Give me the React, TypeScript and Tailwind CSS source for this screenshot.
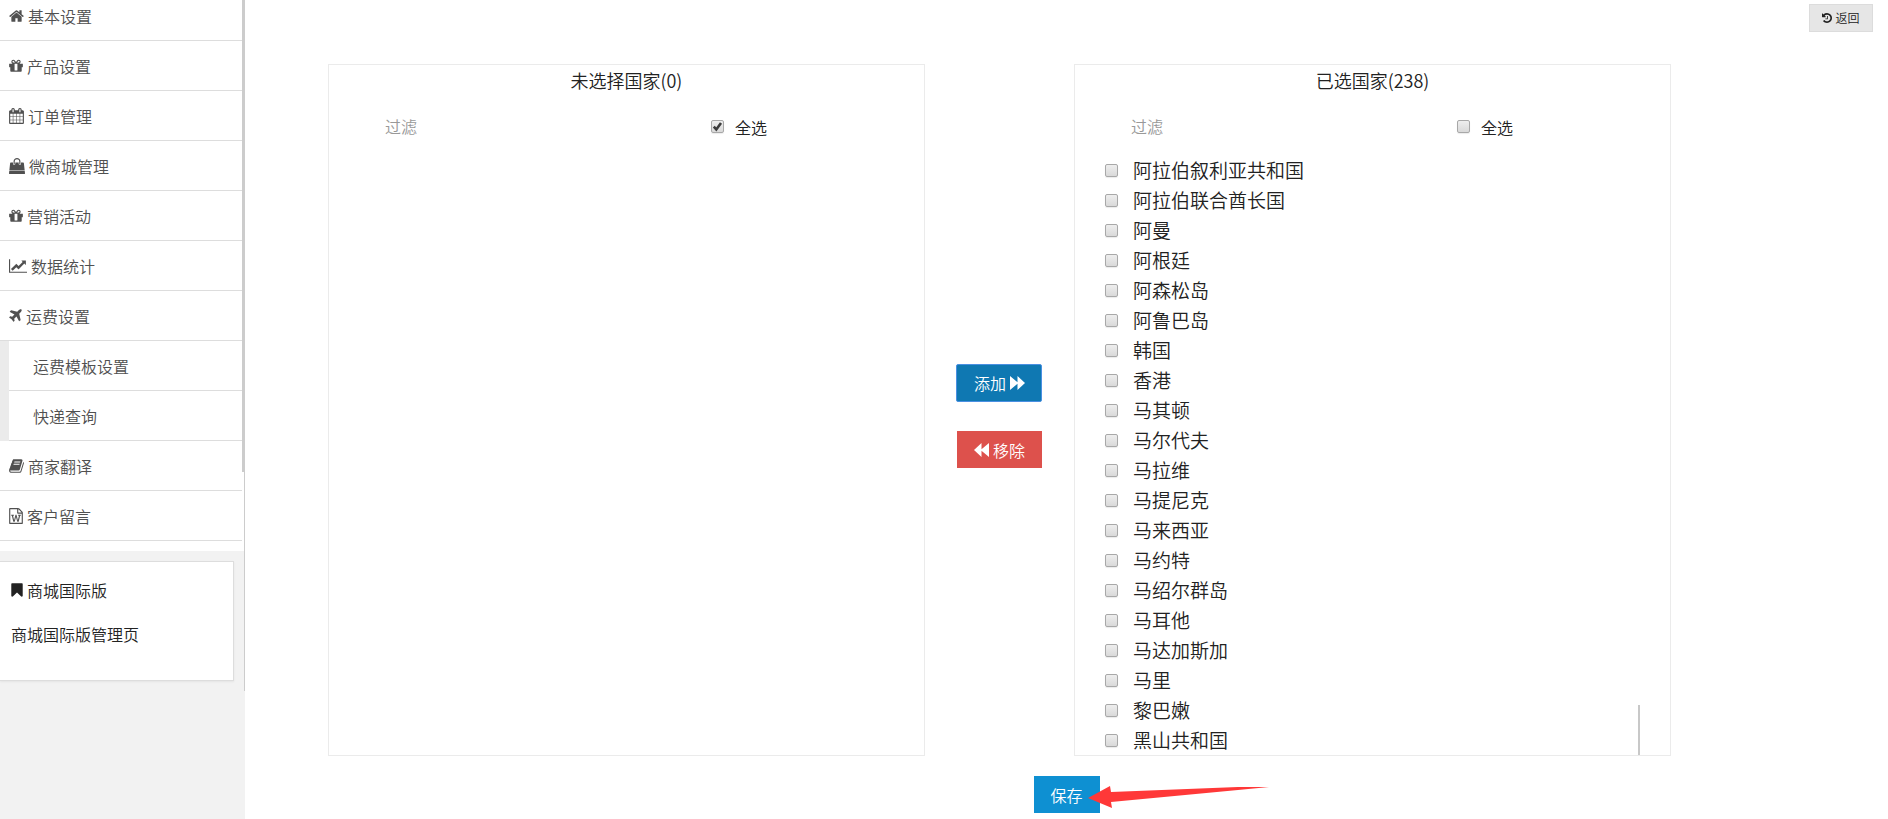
import { useState } from "react";
import type { ReactNode } from "react";

type IconProps = { box: string; d: string; className: string };

function Icon({ box, d, className }: IconProps) {
  return (
    <svg viewBox={box} className={className} fill="currentColor" aria-hidden="true">
      <path d={d} />
    </svg>
  );
}

const GIFT =
  "M1056 1356v-716h-320v716q0 25 18 38.5t46 13.5h192q28 0 46-13.5t18-38.5zm-456-844h195l-126-161q-26-31-69-31-40 0-68 28t-28 68 28 68 68 28zm688-96q0-40-28-68t-68-28q-43 0-69 31l-125 161h194q40 0 68-28t28-68zm376 256v320q0 14-9 23t-23 9h-96v416q0 40-28 68t-68 28h-1088q-40 0-68-28t-28-68v-416h-96q-14 0-23-9t-9-23v-320q0-14 9-23t23-9h440q-93 0-158.5-65.5t-65.5-158.5 65.5-158.5 158.5-65.5q107 0 168 77l128 165 128-165q61-77 168-77 93 0 158.5 65.5t65.5 158.5-65.5 158.5-158.5 65.5h440q14 0 23 9t9 23z";

const HOME =
  "M1472 992v480q0 26-19 45t-45 19h-384v-384h-256v384h-384q-26 0-45-19t-19-45v-480q0-1 .5-3t.5-3l575-474 575 474q1 2 1 6zm223-69l-62 74q-8 9-21 11h-3q-13 0-21-7l-692-577-692 577q-12 8-24 7-13-2-21-11l-62-74q-8-10-7-23.5t11-21.5l719-599q32-26 76-26t76 26l244 204v-195q0-14 9-23t23-9h192q14 0 23 9t9 23v408l219 182q10 8 11 21.5t-7 23.5z";

const CALENDAR =
  "M192 1664h288v-288h-288v288zm352 0h320v-288h-320v288zm-352-352h288v-320h-288v320zm352 0h320v-320h-320v320zm-352-384h288v-288h-288v288zm736 736h320v-288h-320v288zm-384-736h320v-288h-320v288zm768 736h288v-288h-288v288zm-384-352h320v-320h-320v320zm-352-864v-288q0-13-9.5-22.5t-22.5-9.5h-64q-13 0-22.5 9.5t-9.5 22.5v288q0 13 9.5 22.5t22.5 9.5h64q13 0 22.5-9.5t9.5-22.5zm736 864h288v-320h-288v320zm-384-384h320v-288h-320v288zm384 0h288v-288h-288v288zm32-480v-288q0-13-9.5-22.5t-22.5-9.5h-64q-13 0-22.5 9.5t-9.5 22.5v288q0 13 9.5 22.5t22.5 9.5h64q13 0 22.5-9.5t9.5-22.5zm384-64v1280q0 52-38 90t-90 38h-1408q-52 0-90-38t-38-90v-1280q0-52 38-90t90-38h128v-96q0-66 47-113t113-47h64q66 0 113 47t47 113v96h384v-96q0-66 47-113t113-47h64q66 0 113 47t47 113v96h128q52 0 90 38t38 90z";

const BAG =
  "M1757 1408l35 313q3 28-16 50-19 21-48 21h-1664q-29 0-48-21-19-22-16-50l35-313h1722zm-93-839l86 775h-1708l86-775q3-24 21-40.5t43-16.5h256v128q0 53 37.5 90.5t90.5 37.5 90.5-37.5 37.5-90.5v-128h384v128q0 53 37.5 90.5t90.5 37.5 90.5-37.5 37.5-90.5v-128h256q25 0 43 16.5t21 40.5zm-384-185v256q0 26-19 45t-45 19-45-19-19-45v-256q0-106-75-181t-181-75-181 75-75 181v256q0 26-19 45t-45 19-45-19-19-45v-256q0-159 112.5-271.5t271.5-112.5 271.5 112.5 112.5 271.5z";

const CHART =
  "M2048 1536v128h-2048v-1536h128v1408h1920zm-128-1248v435q0 21-19.5 29.5t-35.5-7.5l-121-121-633 633q-10 10-23 10t-23-10l-233-233-416 416-192-192 585-585q10-10 23-10t23 10l233 233 464-464-121-121q-16-16-7.5-35.5t29.5-19.5h435q14 0 23 9t9 23z";

const PLANE =
  "M1568 160q44 52 12 148t-108 172l-161 161 160 696q5 19-12 33l-128 96q-7 6-19 6-4 0-7-1-15-3-21-16l-279-508-259 259 53 194q5 17-8 31l-96 96q-9 9-23 9h-2q-15-2-24-13l-189-252-252-189q-11-7-13-23-1-13 9-25l96-97q9-9 23-9 6 0 8 1l194 53 259-259-508-279q-14-8-17-24-2-16 9-27l128-128q14-13 30-8l665 159 160-160q76-76 172-108t148 12z";

const BOOK =
  "M1703 478q40 57 18 129l-275 906q-19 64-76.5 107.5t-122.5 43.5h-923q-77 0-148.5-53.5t-99.5-131.5q-24-67-2-127 0-4 3-27t4-37q1-8-3-21.5t-3-19.5q2-11 8-21t16.5-23.5 16.5-23.5q23-38 45-91.5t30-91.5q3-10 .5-30t-.5-28q3-11 17-28t17-23q21-36 42-92t25-90q1-9-2.5-32t.5-28q4-13 22-30.5t22-22.5q19-26 42.5-84.5t27.5-96.5q1-8-3-25.5t-2-26.5q2-8 9-18t18-23 17-21q8-12 16.5-30.5t15-35 16-36 19.5-32 26.5-23.5 36-11.5 47.5 5.5l-1 3q38-9 51-9h761q74 0 114 56t18 130l-274 906q-36 119-71.5 153.5t-128.5 34.5h-869q-27 0-38 15-11 16-1 43 24 70 144 70h923q29 0 56-15.5t35-41.5l300-987q7-22 5-57 38 15 59 43zm-1064 2q-4 13 2 22.5t20 9.5h608q13 0 25.5-9.5t16.5-22.5l21-64q4-13-2-22.5t-20-9.5h-608q-13 0-25.5 9.5t-16.5 22.5zm-83 256q-4 13 2 22.5t20 9.5h608q13 0 25.5-9.5t16.5-22.5l21-64q4-13-2-22.5t-20-9.5h-608q-13 0-25.5 9.5t-16.5 22.5z";

const WORD_FILE =
  "M1596 380q28 28 48 76t20 88v1152q0 40-28 68t-68 28h-1344q-40 0-68-28t-28-68v-1600q0-40 28-68t68-28h896q40 0 88 20t76 48zm-444-244v376h376q-10-29-22-41l-313-313q-12-12-41-22zm384 1528v-1024h-416q-40 0-68-28t-28-68v-416h-768v1536h1280zm-1175-896v107h70l164 661h159l128-485q7-20 10-46 2-16 2-24h4l3 24q1 3 3.5 20t5.5 26l128 485h159l164-661h70v-107h-300v107h90l-99 438q-5 20-7 46l-2 21h-4l-3-21q-1-5-4-21t-5-25l-144-545h-114l-144 545q-2 9-4.5 24.5t-3.5 21.5l-4 21h-4l-2-21q-2-26-7-46l-99-438h90v-107h-300z";

const BOOKMARK =
  "M1420 128q23 0 44 9 33 13 52.5 41t19.5 62v1289q0 34-19.5 62t-52.5 41q-19 8-44 8-48 0-83-32l-441-424-441 424q-36 33-83 33-23 0-44-9-33-13-52.5-41t-19.5-62v-1289q0-34 19.5-62t52.5-41q21-9 44-9h1048z";

const HISTORY =
  "M1664 896q0 156-61 298t-164 245-245 164-298 61q-172 0-327-72.5t-264-204.5q-7-10-6.5-22.5t8.5-20.5l137-138q10-9 25-9 16 2 23 12 73 95 179 147t225 52q104 0 198.5-40.5t163.5-109.5 109.5-163.5 40.5-198.5-40.5-198.5-109.5-163.5-163.5-109.5-198.5-40.5q-98 0-188 35.5t-160 101.5l137 138q31 30 14 69-17 40-59 40h-448q-26 0-45-19t-19-45v-448q0-42 40-59 39-17 69 14l130 129q107-101 244.5-156.5t284.5-55.5q156 0 298 61t245 164 164 245 61 298zm-640-288v448q0 14-9 23t-23 9h-320q-14 0-23-9t-9-23v-64q0-14 9-23t23-9h224v-352q0-14 9-23t23-9h64q14 0 23 9t9 23z";

type MenuEntry = {
  label: string;
  box: string;
  d: string;
  size: string;
  children?: string[];
};

const MENU: MenuEntry[] = [
  { label: "基本设置", box: "64 0 1664 1792", d: HOME, size: "h-4 w-[15px]" },
  { label: "产品设置", box: "128 0 1536 1792", d: GIFT, size: "h-4 w-[14px]" },
  { label: "订单管理", box: "64 0 1664 1792", d: CALENDAR, size: "h-4 w-[15px]" },
  { label: "微商城管理", box: "0 0 1792 1792", d: BAG, size: "h-4 w-4" },
  { label: "营销活动", box: "128 0 1536 1792", d: GIFT, size: "h-4 w-[14px]" },
  { label: "数据统计", box: "0 0 2048 1792", d: CHART, size: "h-4 w-[18px]" },
  {
    label: "运费设置",
    box: "192 0 1408 1792",
    d: PLANE,
    size: "h-4 w-[13px]",
    children: ["运费模板设置", "快递查询"],
  },
  { label: "商家翻译", box: "64 0 1664 1792", d: BOOK, size: "h-4 w-[15px]" },
  { label: "客户留言", box: "128 0 1536 1792", d: WORD_FILE, size: "h-4 w-[14px]" },
];

const SELECTED = [
  "阿拉伯叙利亚共和国",
  "阿拉伯联合酋长国",
  "阿曼",
  "阿根廷",
  "阿森松岛",
  "阿鲁巴岛",
  "韩国",
  "香港",
  "马其顿",
  "马尔代夫",
  "马拉维",
  "马提尼克",
  "马来西亚",
  "马约特",
  "马绍尔群岛",
  "马耳他",
  "马达加斯加",
  "马里",
  "黎巴嫩",
  "黑山共和国",
];

function Checkbox({ id, initial = false }: { id: string; initial?: boolean }) {
  const [checked, setChecked] = useState(initial);
  return (
    <span className="relative flex size-[13px] shrink-0">
      <input
        id={id}
        type="checkbox"
        checked={checked}
        onChange={(e) => setChecked(e.target.checked)}
        className="size-[13px] appearance-none rounded-[2px] border border-[#a8a8a8] bg-linear-to-b from-[#eeeeee] to-[#d9d9d9] shadow-[0_1px_1px_rgba(0,0,0,0.08)]"
      />
      {checked && (
        <svg viewBox="0 0 13 13" className="pointer-events-none absolute inset-0 size-[13px]" aria-hidden="true">
          <path d="M2.8 6.6 5.3 9.4 10 3" fill="none" stroke="#3c3c3c" strokeWidth="2.6" />
        </svg>
      )}
    </span>
  );
}

function Sidebar() {
  return (
    <aside className="relative w-[245px] shrink-0 bg-[#f2f2f2]">
      <nav className="h-[551px] overflow-hidden bg-white">
        <ul className="-mt-[9px] mr-[3px] text-base text-[#505050]">
          {MENU.map((item) => (
            <li key={item.label}>
              <a href="#" className="flex h-[50px] items-center gap-1 border-b border-[#dddddd] pl-[9px]">
                <Icon box={item.box} d={item.d} className={`${item.size} shrink-0`} />
                {item.label}
              </a>
              {item.children && (
                <ul className="border-l-[9px] border-[#ebebeb]">
                  {item.children.map((child) => (
                    <li key={child}>
                      <a href="#" className="flex h-[50px] items-center border-b border-[#dddddd] pl-6">
                        {child}
                      </a>
                    </li>
                  ))}
                </ul>
              )}
            </li>
          ))}
        </ul>
      </nav>
      <section className="mt-[10px] mr-[11px] h-[120px] border border-l-0 border-[#dddddd] bg-white pt-4 pl-[11px] text-base leading-6 text-[#222222] shadow-[0_1px_2px_rgba(0,0,0,0.06)]">
        <h2 className="flex items-center gap-1">
          <Icon box="256 0 1280 1792" d={BOOKMARK} className="h-4 w-3" />
          商城国际版
        </h2>
        <a href="#" className="mt-5 block">
          商城国际版管理页
        </a>
      </section>
      <div className="absolute top-0 right-0 h-[691px] w-px bg-[#cccccc]" />
      <div className="absolute top-0 right-0 h-[472px] w-[3px] bg-[#cccccc]" />
    </aside>
  );
}

function Panel({
  id,
  title,
  allChecked,
  children,
}: {
  id: string;
  title: string;
  allChecked: boolean;
  children?: ReactNode;
}) {
  return (
    <section className="relative border border-[#ebebeb]">
      <h2 className="pt-[2px] text-center text-lg leading-[26px]">{title}</h2>
      <div className="flex h-[62px] items-center pt-1 pl-14">
        <input
          type="text"
          aria-label="过滤"
          placeholder="过滤"
          className="w-[326px] min-w-0 text-base outline-none placeholder:text-[#999999]"
        />
        <Checkbox id={`${id}-all`} initial={allChecked} />
        <label htmlFor={`${id}-all`} className="pt-px pl-[11px] text-base">
          全选
        </label>
      </div>
      {children}
    </section>
  );
}

export default function App() {
  return (
    <div className="flex min-h-screen bg-white font-['Noto_Sans_CJK_SC','Noto_Sans',sans-serif] font-[350] text-[#222222]">
      <Sidebar />
      <main className="min-w-0 flex-1">
        <div className="flex justify-end pt-1 pr-[15px]">
          <button
            type="button"
            className="flex h-7 w-16 items-center justify-center gap-[3px] border border-[#dcdcdc] bg-[#e6e6e6] text-xs"
          >
            <Icon box="128 0 1536 1792" d={HISTORY} className="h-3 w-[10px]" />
            返回
          </button>
        </div>
        <div className="mt-8 grid grid-cols-[4fr_1fr_4fr] pr-[217px] pl-[83px]">
          <Panel id="available" title="未选择国家(0)" allChecked />
          <div className="flex flex-col items-center justify-center gap-[29px] pt-3 text-base leading-6 text-white">
            <button
              type="button"
              className="flex h-[38px] w-[86px] items-center justify-center gap-1 rounded-[2px] border border-[#4a90e2] bg-[#0f78b2]"
            >
              添加
              <svg viewBox="0 0 15 14" className="h-[14px] w-[15px]" fill="currentColor" aria-hidden="true">
                <path d="M0 0 7.5 6.3V0L15 7 7.5 14V7.7L0 14Z" />
              </svg>
            </button>
            <button type="button" className="flex h-[37px] w-[85px] items-center justify-center gap-1 bg-[#dd514c]">
              <svg viewBox="0 0 15 14" className="h-[14px] w-[15px]" fill="currentColor" aria-hidden="true">
                <path d="M15 0 7.5 6.3V0L0 7 7.5 14V7.7L15 14Z" />
              </svg>
              移除
            </button>
          </div>
          <Panel id="selected" title="已选国家(238)" allChecked={false}>
            <ul className="pl-[30px] text-[19px] leading-[30px]">
              {SELECTED.map((name, i) => (
                <li key={name} className="flex h-[30px] items-center gap-[15px]">
                  <Checkbox id={`country-${i}`} />
                  <label htmlFor={`country-${i}`}>{name}</label>
                </li>
              ))}
            </ul>
            <div className="absolute right-[30px] bottom-0 h-[50px] w-[2px] bg-[#c8c8c8]" />
          </Panel>
        </div>
        <div className="mt-5 flex justify-center">
          <div className="relative">
            <button type="button" className="block h-[37px] w-[66px] bg-[#0e90d2] text-base text-white">
              保存
            </button>
            <svg
              viewBox="0 0 182 24"
              className="pointer-events-none absolute top-[9px] left-[54px] h-6 w-[182px]"
              fill="#ff3838"
              aria-hidden="true"
            >
              <path d="M0 13 22 1 23 7 150 2 181 2 150 5 23 17 24 23Z" />
            </svg>
          </div>
        </div>
      </main>
    </div>
  );
}
